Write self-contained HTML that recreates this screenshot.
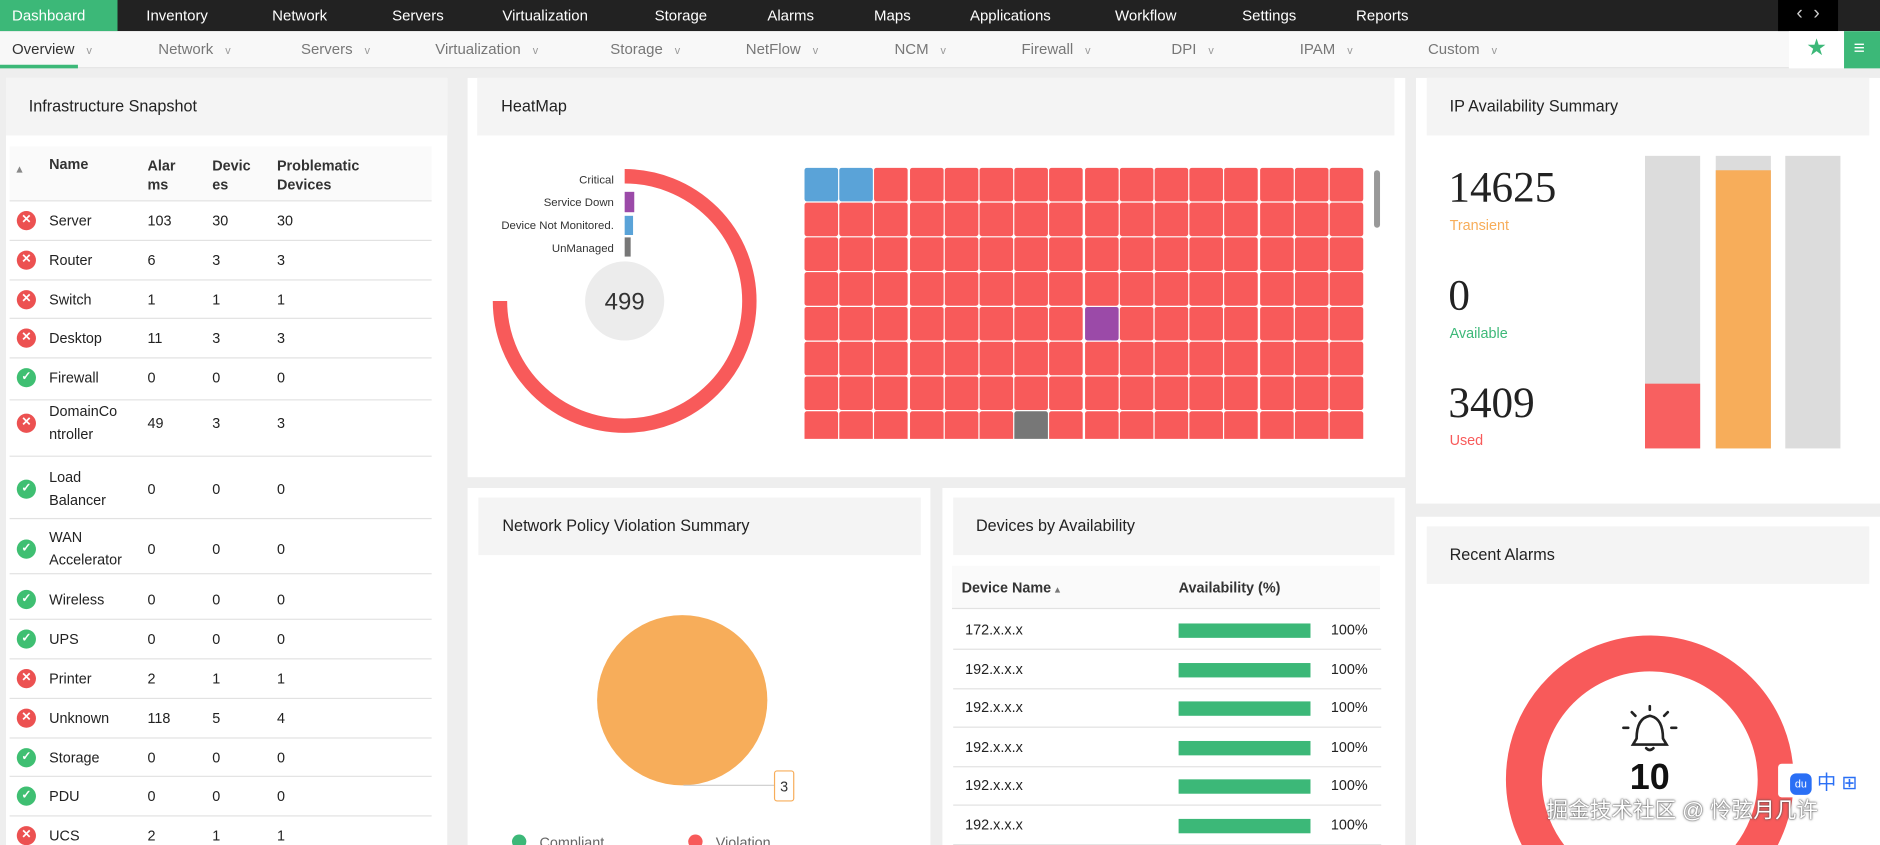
<!DOCTYPE html>
<html><head><meta charset="utf-8"><style>
*{box-sizing:border-box;margin:0;padding:0}
html,body{width:1880px;height:845px;overflow:hidden;background:#eeeeee}
#w{position:absolute;left:0;top:0;width:1568px;height:705px;overflow:hidden;transform:scale(1.19898);transform-origin:0 0;font-family:"Liberation Sans",sans-serif;color:#222;font-size:12px}
.a{position:absolute}
.top{left:0;top:0;width:1568px;height:26px;background:#222}
.top span{position:absolute;top:6px;color:#fff;font-size:12.5px}
.sub{left:0;top:26px;width:1568px;height:31px;background:#f8f8f8;border-bottom:1px solid #e4e4e4}
.sub span{position:absolute;top:8px;color:#777;font-size:12.5px}
.sub i{font-style:normal;color:#999;font-size:9px;margin-left:10px}
.panel{background:#fff}
.hd{background:#f4f4f4;font-size:13.5px;color:#222;padding-left:19px;line-height:48px;height:48px}
.row{position:absolute;left:8px;width:352px;border-bottom:1px solid #e2e2e2;font-size:12px}
.row span{position:absolute;line-height:16px}
.ic{width:16px;height:16px;border-radius:50%;color:#fff;font-size:10px;text-align:center;line-height:16px;font-weight:bold}
.x{background:#ec5151}.ok{background:#3fbf72}
.cell{position:absolute;width:28px;height:28px;background:#f85a5a;border-radius:2px}
</style></head><body><div id="w">
<div class="a top">
<div class="a" style="left:0;top:0;width:98px;height:26px;background:#3cb878"></div>
<span style="left:10px">Dashboard</span><span style="left:122px">Inventory</span><span style="left:227px">Network</span><span style="left:327px">Servers</span><span style="left:419px">Virtualization</span><span style="left:546px">Storage</span><span style="left:640px">Alarms</span><span style="left:729px">Maps</span><span style="left:809px">Applications</span><span style="left:930px">Workflow</span><span style="left:1036px">Settings</span><span style="left:1131px">Reports</span>
<div class="a" style="left:1483px;top:0;width:50px;height:26px;background:#000;color:#ccc;font-size:16px;line-height:24px;text-align:center">&lsaquo;&nbsp;&nbsp;&rsaquo;</div>
</div>
<div class="a sub">
<span style="left:10px;color:#333">Overview<i>v</i></span><span style="left:132px">Network<i>v</i></span><span style="left:251px">Servers<i>v</i></span><span style="left:363px">Virtualization<i>v</i></span><span style="left:509px">Storage<i>v</i></span><span style="left:622px">NetFlow<i>v</i></span><span style="left:746px">NCM<i>v</i></span><span style="left:852px">Firewall<i>v</i></span><span style="left:977px">DPI<i>v</i></span><span style="left:1084px">IPAM<i>v</i></span><span style="left:1191px">Custom<i>v</i></span>
<div class="a" style="left:0;top:28px;width:65px;height:3px;background:#3cb878"></div>
<div class="a" style="left:1492px;top:0;width:46px;height:31px;background:#fff;color:#3cb878;font-size:19px;text-align:center;line-height:30px">★</div>
<div class="a" style="left:1538px;top:0;width:30px;height:31px;background:#3cb878;color:#fff;font-size:16px;line-height:30px;padding-left:8px">≡</div>
</div>

<div class="a panel" style="left:5px;top:65px;width:368px;height:640px">
<div class="hd">Infrastructure Snapshot</div>
<div class="a" style="left:3px;top:57px;width:352px;height:46px;background:#fafafa;border-bottom:1px solid #e2e2e2;font-size:12px;font-weight:bold;color:#333">
<span class="a" style="left:6px;top:14px;font-size:9px;color:#888">▴</span>
<span class="a" style="left:33px;top:8px">Name</span>
<span class="a" style="left:115px;top:8px;line-height:16px">Alar<br>ms</span>
<span class="a" style="left:169px;top:8px;line-height:16px">Devic<br>es</span>
<span class="a" style="left:223px;top:8px;line-height:16px">Problematic<br>Devices</span>
</div>
</div>
<div id="rows"></div>

<div class="a panel" style="left:390px;top:65px;width:782px;height:333px">
<div class="hd" style="margin:0 9px 0 8px;padding-left:20px">HeatMap</div>
</div>
<svg class="a" style="left:390px;top:120px" width="260" height="270">
<path d="M131 27 A104 104 0 1 1 27 131" fill="none" stroke="#f85a5a" stroke-width="12"/>
<rect x="131" y="40" width="8" height="17" fill="#9b4aa8"/>
<rect x="131" y="60" width="7" height="16" fill="#5aa3d8"/>
<rect x="131" y="78" width="5" height="16" fill="#777"/>
<circle cx="131" cy="131" r="33" fill="#ececec"/>
<text x="131" y="138" text-anchor="middle" font-size="20" font-family="Liberation Sans" fill="#333">499</text>
<g font-size="9.5" font-family="Liberation Sans" fill="#333" text-anchor="end">
<text x="122" y="33">Critical</text><text x="122" y="52">Service Down</text><text x="122" y="71">Device Not Monitored.</text><text x="122" y="90">UnManaged</text></g>
</svg>
<div class="a" style="left:670px;top:139px;width:468px;height:227px;overflow:hidden" id="grid"></div>
<div class="a" style="left:1146px;top:142px;width:5px;height:48px;background:#999;border-radius:3px"></div>

<div class="a panel" style="left:390px;top:407px;width:386px;height:298px">
<div class="hd" style="margin:8px 8px 0 9px;padding-left:20px">Network Policy Violation Summary</div>
</div>
<svg class="a" style="left:390px;top:470px" width="386" height="235">
<circle cx="179" cy="114" r="71" fill="#f7ad5a"/>
<path d="M180 185 L256 185" stroke="#ccc" fill="none"/>
<rect x="256" y="173" width="16" height="25" rx="2" fill="#fff" stroke="#f7ad5a"/>
<text x="264" y="190" text-anchor="middle" font-size="12" font-family="Liberation Sans" fill="#333">3</text>
<circle cx="43" cy="232" r="6" fill="#3cb878"/><text x="60" y="237" font-size="12" fill="#666" font-family="Liberation Sans">Compliant</text>
<circle cx="190" cy="232" r="6" fill="#f85a5a"/><text x="207" y="237" font-size="12" fill="#666" font-family="Liberation Sans">Violation</text>
</svg>

<div class="a panel" style="left:786px;top:407px;width:386px;height:298px">
<div class="hd" style="margin:8px 9px 0 9px;padding-left:19px">Devices by Availability</div>
<div class="a" style="left:8px;top:65px;width:357px;height:36px;background:#fafafa;border-bottom:1px solid #e2e2e2;font-size:12px;font-weight:bold;color:#333">
<span class="a" style="left:8px;top:11px">Device Name <span style="font-size:8px;color:#777">▴</span></span>
<span class="a" style="left:189px;top:11px">Availability (%)</span></div>
</div>
<div id="drows"></div>

<div class="a panel" style="left:1181px;top:65px;width:387px;height:355px">
<div class="hd" style="margin:0 9px;padding-left:19px">IP Availability Summary</div>
<div class="a" style="left:27px;top:70px;font-size:36px;font-family:'Liberation Serif',serif;color:#222">14625</div>
<div class="a" style="left:28px;top:116px;font-size:12px;color:#f7ad5a">Transient</div>
<div class="a" style="left:27px;top:160px;font-size:36px;font-family:'Liberation Serif',serif;color:#222">0</div>
<div class="a" style="left:28px;top:206px;font-size:12px;color:#3cb878">Available</div>
<div class="a" style="left:27px;top:250px;font-size:36px;font-family:'Liberation Serif',serif;color:#222">3409</div>
<div class="a" style="left:28px;top:295px;font-size:12px;color:#f85a5a">Used</div>
<div class="a" style="left:191px;top:65px;width:46px;height:244px;background:#dcdcdc"><div class="a" style="left:0;bottom:0;width:46px;height:54px;background:#f86060"></div></div>
<div class="a" style="left:250px;top:65px;width:46px;height:244px;background:#dcdcdc"><div class="a" style="left:0;bottom:0;width:46px;height:232px;background:#f7ad5a"></div></div>
<div class="a" style="left:308px;top:65px;width:46px;height:244px;background:#dcdcdc"></div>
</div>

<div class="a panel" style="left:1181px;top:431px;width:387px;height:274px;overflow:hidden">
<div class="hd" style="margin:8px 9px 0 9px;padding-left:19px">Recent Alarms</div>
<svg class="a" style="left:0;top:0" width="387" height="274">
<circle cx="195" cy="219" r="105" fill="none" stroke="#f85a5a" stroke-width="30"/>
<g stroke="#222" stroke-width="2.2" fill="none" stroke-linecap="round">
<path d="M184 185 Q184 168 195 166 Q206 168 206 185 L209 190 L181 190 Z"/>
<path d="M192 193 Q195 196 198 193"/>
<path d="M195 158 L195 161 M180 163 L183 166 M210 163 L207 166 M173 176 L177 176 M217 176 L213 176"/></g>
<text x="195" y="227" text-anchor="middle" font-size="30" font-weight="bold" font-family="Liberation Sans" fill="#111">10</text>
</svg>
</div>
<div class="a" style="left:1483px;top:637px;width:85px;height:28px;background:#fff;border-radius:3px;color:#2a6ff5;font-size:16px;line-height:28px;padding-left:10px"><span style="display:inline-block;width:18px;height:18px;border-radius:5px;background:#2a6ff5;color:#fff;font-size:9px;line-height:18px;text-align:center;vertical-align:middle">du</span> <span style="font-family:'Noto Sans CJK SC',sans-serif">中</span> ⊞</div>
<div class="a" style="left:1290px;top:662px;font-size:18px;color:#fff;text-shadow:0 0 2px #555,0 0 1px #333;font-family:'Liberation Sans','Noto Sans CJK SC',sans-serif">掘金技术社区 @ 怜弦月几许</div>
</div>
<script>
var rows=[["x","Server","103","30","30",184],["x","Router","6","3","3",217],["x","Switch","1","1","1",250],["x","Desktop","11","3","3",282],["ok","Firewall","0","0","0",315],["x","DomainCo<br>ntroller","49","3","3",353],["ok","Load<br>Balancer","0","0","0",408],["ok","WAN<br>Accelerator","0","0","0",458],["ok","Wireless","0","0","0",500],["ok","UPS","0","0","0",533],["x","Printer","2","1","1",566],["x","Unknown","118","5","4",599],["ok","Storage","0","0","0",632],["ok","PDU","0","0","0",664],["x","UCS","2","1","1",697]];
var h="",prev=168;
rows.forEach(function(r,i){var c=r[5];var bot=i<rows.length-1?(c+rows[i+1][5])/2:712;
h+='<div class="row" style="top:'+prev+'px;height:'+(bot-prev)+'px">';
var y=c-prev;var ml=r[1].indexOf("<br>")>0;
h+='<span class="ic '+r[0]+'" style="left:6px;top:'+(y-8)+'px">'+(r[0]=="x"?"✕":"✓")+'</span>';
h+='<span style="left:33px;top:'+(y-(ml?19:8))+'px;line-height:'+(ml?'19px':'16px')+'">'+r[1]+'</span>';
h+='<span style="left:115px;top:'+(y-8)+'px">'+r[2]+'</span><span style="left:169px;top:'+(y-8)+'px">'+r[3]+'</span><span style="left:223px;top:'+(y-8)+'px">'+r[4]+'</span></div>';prev=bot;});
document.getElementById("rows").innerHTML=h;
var g="";for(var r=0;r<8;r++)for(var c=0;c<16;c++){var col="#f85a5a";if(r==0&&c<2)col="#5aa3d8";if(r==4&&c==8)col="#9b4aa8";if(r==7&&c==6)col="#777";g+='<div class="cell" style="left:'+(c*29.2+1)+'px;top:'+(r*29+1)+'px;background:'+col+'"></div>';}
document.getElementById("grid").innerHTML=g;
var d="",ys=[525,558,590,623,655,688],ip=["172.x.x.x","192.x.x.x","192.x.x.x","192.x.x.x","192.x.x.x","192.x.x.x"];
ys.forEach(function(y,i){d+='<div class="a" style="left:795px;top:'+(y-16)+'px;width:357px;height:33px;border-bottom:1px solid #e2e2e2;font-size:12px"><span class="a" style="left:10px;top:9px">'+ip[i]+'</span><div class="a" style="left:188px;top:11px;width:110px;height:12px;background:#3cb878"></div><span class="a" style="left:315px;top:9px">100%</span></div>';});
document.getElementById("drows").innerHTML=d;
</script>
</body></html>
